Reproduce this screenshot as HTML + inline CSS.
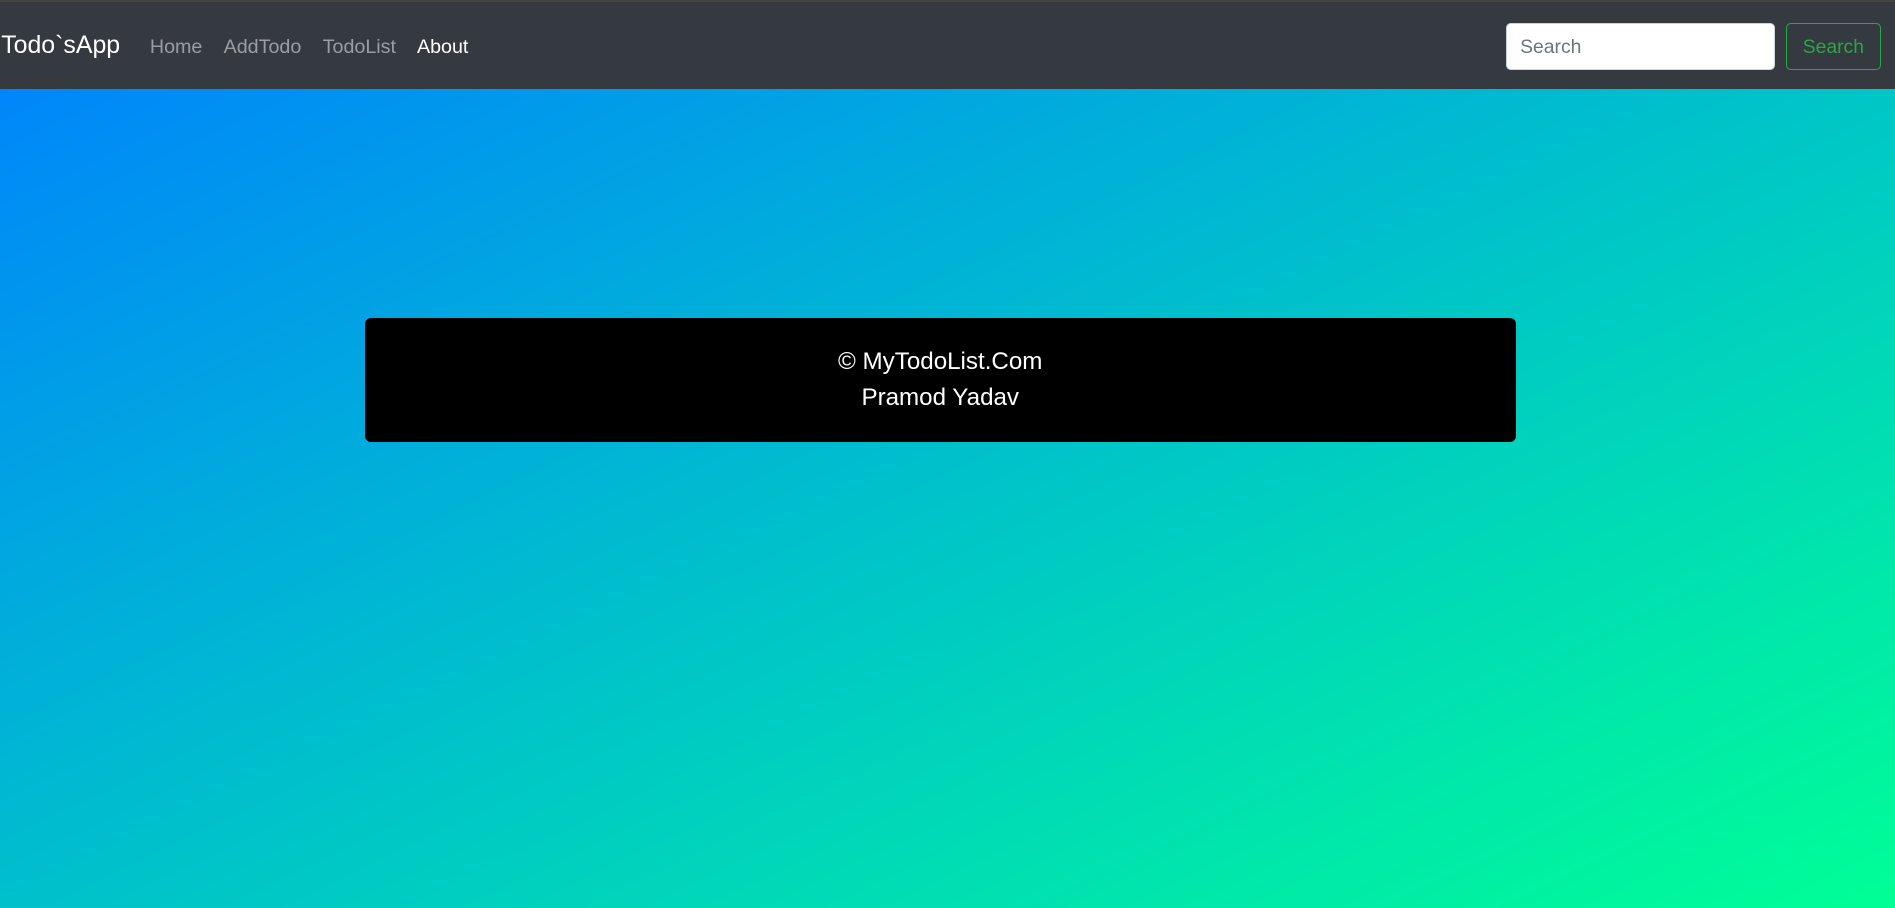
<!DOCTYPE html>
<html><head><meta charset="utf-8"><style>
html,body{margin:0;padding:0;overflow:hidden}
body{width:1895px;height:908px}
#w{zoom:1.20855;width:1568px;height:751.3px;position:relative;font-family:"Liberation Sans",Arial,sans-serif;background:linear-gradient(to bottom right,#0080ff,#00c0cc 50%,#00ff96)}
nav{position:absolute;left:0;top:0;width:1568px;height:74px;background:#343a40;border-top:2px solid #444;box-sizing:border-box}
.brand{position:absolute;left:1px;top:24px;font-size:20.6px;color:#fff;line-height:24px}
.l{position:absolute;top:27px;font-size:16.3px;line-height:20px;color:rgba(255,255,255,.5)}
.inp{position:absolute;left:1246px;top:17px;width:223px;height:39px;box-sizing:border-box;background:#fff;border:1px solid #ced4da;border-radius:4px;color:#6c757d;font-size:16px;padding:10px 11px;line-height:20px}
.btn{position:absolute;left:1478px;top:17px;width:78px;height:39px;box-sizing:border-box;border:1px solid #28a745;border-radius:4px;color:#28a745;font-size:16px;text-align:center;line-height:39px}
.card{position:absolute;left:302px;top:263px;width:952px;height:103px;background:#000;border-radius:5px;color:#fff;text-align:center;font-size:20px}
</style></head><body><div id="w">
<nav>
<div class="brand">Todo`sApp</div>
<div class="l" style="left:124px">Home</div>
<div class="l" style="left:185px">AddTodo</div>
<div class="l" style="left:267px">TodoList</div>
<div class="l" style="left:345px;color:#fff">About</div>
<div class="inp">Search</div>
<div class="btn">Search</div>
</nav>
<div class="card"><div style="position:absolute;left:0;right:0;top:24px;line-height:24px">© MyTodoList.Com</div><div style="position:absolute;left:0;right:0;top:54px;line-height:24px">Pramod Yadav</div></div>
</div></body></html>
